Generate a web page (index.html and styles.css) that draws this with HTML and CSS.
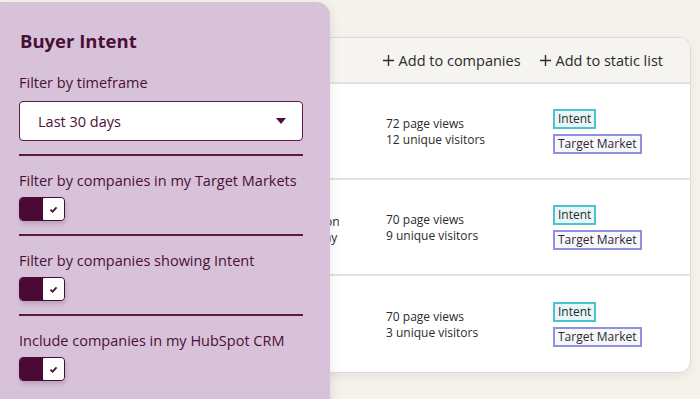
FILE: index.html
```html
<!DOCTYPE html>
<html lang="en">
<head>
    <meta charset="UTF-8">
    <meta name="viewport" content="width=device-width, initial-scale=1.0">
    <title>Buyer Intent</title>
    <link rel="stylesheet" href="styles.css">
</head>
<body>
    <div class="stage">
        <div class="table-card">
            <div class="table-head">
                <span class="action">
                    <svg class="plus" viewBox="0 0 14 14"><path d="M7 1v12M1 7h12"/></svg>
                    Add to companies
                </span>
                <span class="action">
                    <svg class="plus" viewBox="0 0 14 14"><path d="M7 1v12M1 7h12"/></svg>
                    Add to static list
                </span>
            </div>
            <div class="table-row">
                <div class="col-industry"></div>
                <div class="col-views">72 page views<br>12 unique visitors</div>
                <div class="col-tags">
                    <span class="tag tag-intent">Intent</span>
                    <span class="tag tag-market">Target Market</span>
                </div>
            </div>
            <div class="table-row">
                <div class="col-industry">Education Company</div>
                <div class="col-views">70 page views<br>9 unique visitors</div>
                <div class="col-tags">
                    <span class="tag tag-intent">Intent</span>
                    <span class="tag tag-market">Target Market</span>
                </div>
            </div>
            <div class="table-row">
                <div class="col-industry"></div>
                <div class="col-views">70 page views<br>3 unique visitors</div>
                <div class="col-tags">
                    <span class="tag tag-intent">Intent</span>
                    <span class="tag tag-market">Target Market</span>
                </div>
            </div>
        </div>

        <div class="filter-panel">
            <h1>Buyer Intent</h1>
            <div class="filter-group">
                <label>Filter by timeframe</label>
                <div class="select-box">
                    <span>Last 30 days</span>
                    <span class="caret"></span>
                </div>
            </div>
            <div class="filter-group">
                <label>Filter by companies in my Target Markets</label>
                <div class="toggle">
                    <span class="toggle-on"></span>
                    <span class="toggle-knob"><svg viewBox="0 0 10 8"><path d="M1.5 4.2l2.4 2.3L8.5 1.5"/></svg></span>
                </div>
            </div>
            <div class="filter-group">
                <label>Filter by companies showing Intent</label>
                <div class="toggle">
                    <span class="toggle-on"></span>
                    <span class="toggle-knob"><svg viewBox="0 0 10 8"><path d="M1.5 4.2l2.4 2.3L8.5 1.5"/></svg></span>
                </div>
            </div>
            <div class="filter-group last">
                <label>Include companies in my HubSpot CRM</label>
                <div class="toggle">
                    <span class="toggle-on"></span>
                    <span class="toggle-knob"><svg viewBox="0 0 10 8"><path d="M1.5 4.2l2.4 2.3L8.5 1.5"/></svg></span>
                </div>
            </div>
        </div>
    </div>
</body>
</html>
```
FILE: styles.css
```css
* {
    margin: 0;
    padding: 0;
    box-sizing: border-box;
    font-family: 'Open Sans', 'Noto Sans', sans-serif;
}

body {
    background-color: #f5f2ec;
    width: 700px;
    height: 399px;
    overflow: hidden;
}

.stage {
    position: relative;
    height: 399px;
    overflow: hidden;
    padding: 37px 9px 0 150px;
}

/* Companies table behind the panel */
.table-card {
    background-color: #ffffff;
    border: 1px solid #dedbd6;
    border-radius: 12px;
    box-shadow: 0 4px 10px rgba(0, 0, 0, 0.06);
    overflow: hidden;
}

.table-head {
    height: 46px;
    background-color: #f6f4f0;
    border-bottom: 2px solid #e3e1dd;
    display: flex;
    justify-content: flex-end;
    align-items: center;
    gap: 18px;
    padding-right: 27px;
}

.action {
    display: flex;
    align-items: center;
    gap: 4px;
    font-size: 14.5px;
    font-weight: 500;
    color: #2b2b2b;
}

.plus {
    width: 13px;
    height: 13px;
    fill: none;
    stroke: #2b2b2b;
    stroke-width: 1.5;
}

.table-row {
    height: 96px;
    display: flex;
    align-items: center;
    border-bottom: 2px solid #e3e1dd;
    color: #2b2b2b;
    font-size: 12px;
    font-weight: 500;
    line-height: 16px;
}

.table-row:last-child {
    border-bottom: none;
}

.col-industry {
    width: 60px;
    margin-left: 133px;
    margin-right: 42px;
    margin-top: 6px;
}

.col-views {
    width: 167px;
    margin-top: 2px;
}

.col-tags {
    display: flex;
    flex-direction: column;
    align-items: flex-start;
    gap: 5px;
}

.tag {
    font-size: 12px;
    font-weight: 500;
    padding: 1px 3px;
    border: 2px solid;
    line-height: 14px;
}

.tag-intent {
    border-color: #4fc3cb;
    background-color: #e7f7f8;
}

.tag-market {
    border-color: #8f93dc;
    background-color: #f7f7fb;
}

/* Filter panel overlay */
.filter-panel {
    position: absolute;
    left: 0;
    top: 2px;
    width: 330px;
    height: 420px;
    background-color: #d8c2da;
    border-radius: 0 14px 0 0;
    box-shadow: 2px 2px 8px rgba(0, 0, 0, 0.08);
    padding: 26px 27px 0 19px;
    color: #4a0f37;
}

.filter-panel h1 {
    font-size: 18.5px;
    font-weight: 700;
    margin-bottom: 20px;
    margin-left: 1px;
}

.filter-group {
    display: flex;
    flex-direction: column;
    align-items: flex-start;
    border-bottom: 2px solid #5a1c45;
    padding-bottom: 13px;
    margin-bottom: 15px;
}

.filter-group.last {
    border-bottom: none;
}

.filter-group label {
    font-size: 14.5px;
    font-weight: 500;
    margin-bottom: 7px;
}

.select-box {
    align-self: stretch;
    height: 40px;
    margin-top: 2px;
    background-color: #ffffff;
    border: 1px solid #5a1c45;
    border-radius: 4px;
    display: flex;
    justify-content: space-between;
    align-items: center;
    padding: 0 16px 0 18px;
    font-size: 14.5px;
    font-weight: 500;
}

.caret {
    width: 0;
    height: 0;
    border-left: 5px solid transparent;
    border-right: 5px solid transparent;
    border-top: 6px solid #4a0f37;
}

.toggle {
    display: flex;
    width: 46px;
    height: 24px;
    border: 1px solid #4a0a33;
    border-radius: 4px;
    overflow: hidden;
    box-shadow: 1px 3px 4px rgba(0, 0, 0, 0.15);
}

.toggle-on {
    flex: 1;
    background-color: #4a0a33;
}

.toggle-knob {
    width: 21px;
    background-color: #ffffff;
    border-radius: 3px;
    display: flex;
    justify-content: center;
    align-items: center;
}

.toggle-knob svg {
    width: 9px;
    height: 7px;
    fill: none;
    stroke: #4a0a33;
    stroke-width: 2;
}
```
